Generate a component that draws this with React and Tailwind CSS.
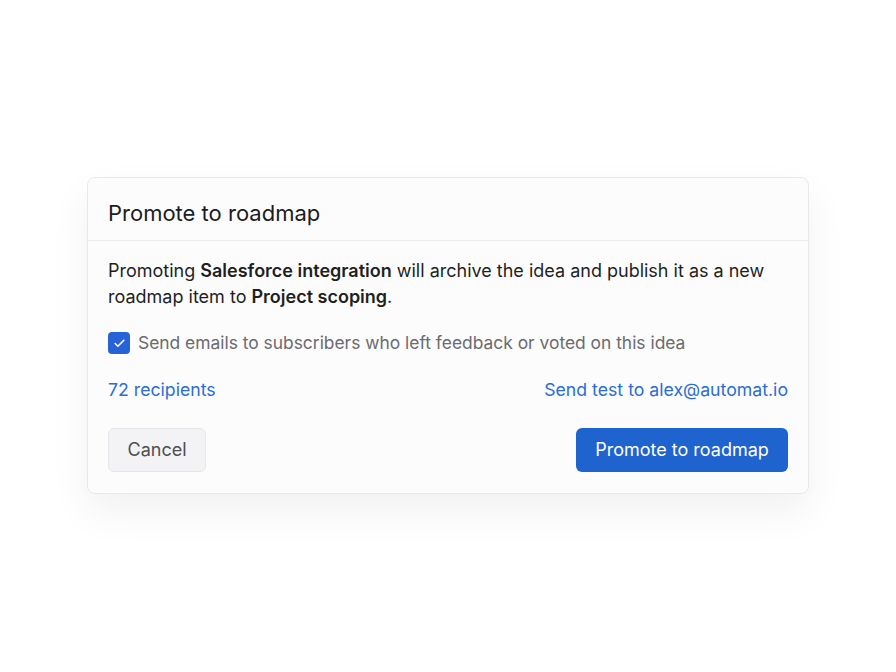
import { Check } from 'lucide-react';

export default function App() {
  return (
    <div
      className="flex h-[672px] w-[896px] justify-center bg-white pt-[177px]"
      style={{ fontFamily: 'Inter, "Noto Sans", sans-serif' }}
    >
      <div className="h-fit w-[722px] rounded-lg border border-[#e9e9ec] bg-[#fcfcfd] shadow-[0_18px_40px_rgba(0,0,0,0.06)]">
        <div className="border-b border-[#ebebee] px-[20px] pt-[21px] pb-[13px]">
          <h2 className="text-[22px] leading-[28px] text-[#1c1c1e]">Promote to roadmap</h2>
        </div>

        <div className="px-[20px] pt-[17px] pb-[21px]">
          <p className="text-[18px] leading-[26px] text-[#1f1f22]">
            Promoting <span className="font-semibold">Salesforce integration</span> will archive the idea and publish it as a new roadmap item to{' '}
            <span className="font-semibold">Project scoping</span>.
          </p>

          <label className="mt-[20px] flex items-center gap-[8px]">
            <span className="flex h-[22px] w-[22px] items-center justify-center rounded-[4px] bg-[#2563d6]">
              <Check size={13} strokeWidth={3} className="text-white" />
            </span>
            <span className="text-[17.4px] text-[#6b6b70]">
              Send emails to subscribers who left feedback or voted on this idea
            </span>
          </label>

          <div className="mt-[21px] flex items-center justify-between text-[17.7px] text-[#2a6dd6]">
            <a href="#">72 recipients</a>
            <a href="#">Send test to alex@automat.io</a>
          </div>

          <div className="mt-[24px] flex items-center justify-between">
            <button
              type="button"
              className="h-[44px] w-[98px] rounded-md border border-[#e6e5e9] bg-[#f3f2f5] text-[18px] text-[#4e4e53]"
            >
              Cancel
            </button>
            <button
              type="button"
              className="h-[44px] w-[212px] rounded-md bg-[#1f63cf] text-[18px] text-white"
            >
              Promote to roadmap
            </button>
          </div>
        </div>
      </div>
    </div>
  );
}
